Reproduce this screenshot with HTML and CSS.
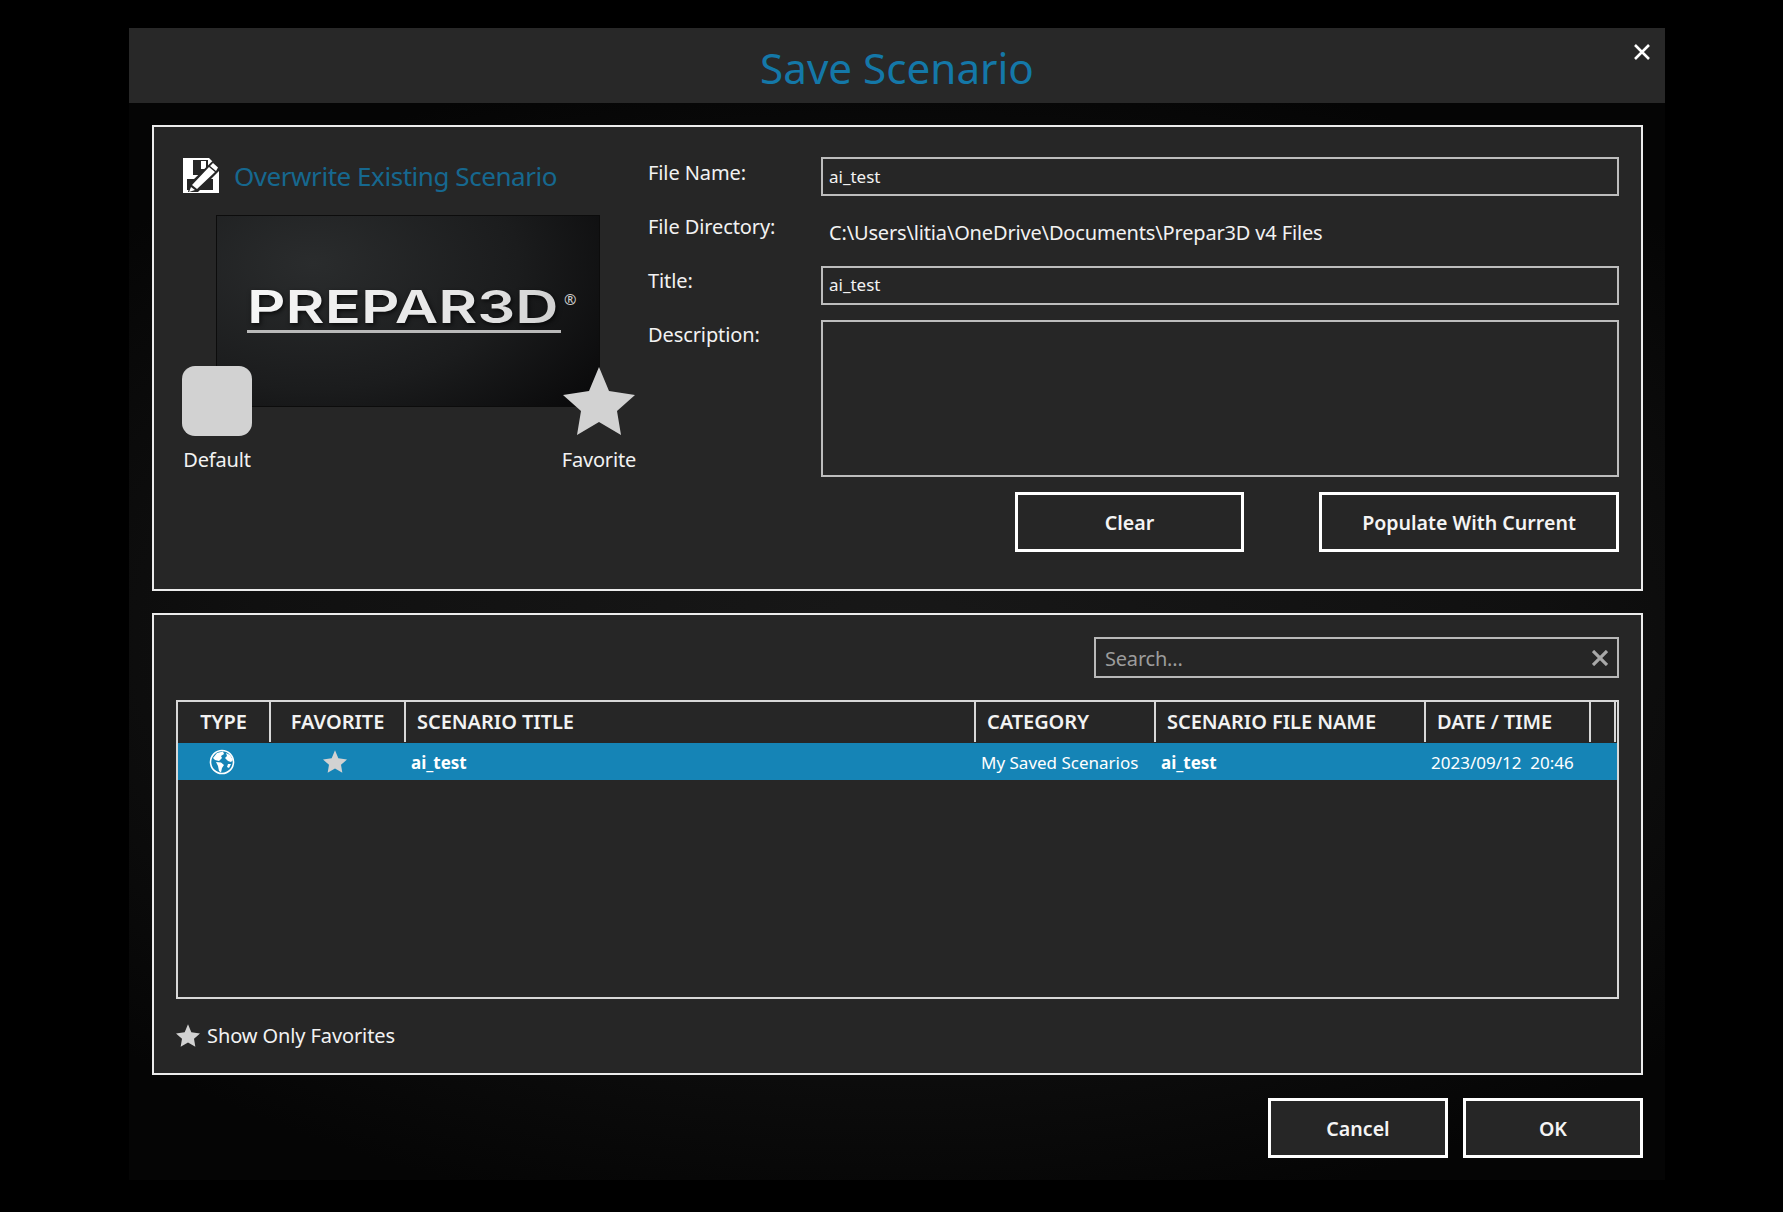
FILE: index.html
```html
<!DOCTYPE html>
<html lang="en">
<head>
<meta charset="utf-8">
<title>Save Scenario</title>
<link rel="stylesheet" href="styles.css">
</head>
<body>
<div class="dialog">
  <header class="titlebar">
    <h1 class="title">Save Scenario</h1>
    <button class="close" aria-label="Close"><svg width="16" height="16" viewBox="0 0 16 16"><path d="M1 1L15 15M15 1L1 15" stroke="#fff" stroke-width="2.6" fill="none"/></svg></button>
  </header>
  <div class="content">
    <section class="panel top">
      <div class="left">
        <div class="overwrite">
          <svg class="disk" width="36" height="35" viewBox="0 0 36 35"><path fill="#fff" d="M0 0H26L36 10V35H0Z"/><path fill="#262626" d="M10 2H25V17H10ZM4 21H30V32H4Z"/><path fill="#fff" d="M18 3H23V11H18Z"/><path fill="#262626" d="M29.500 3L36 8.500V13L15 34H5L7 25Z"/><path fill="#fff" d="M30 5L35 9.500L33 13L27 8ZM26 9L32 14L14 31L9 27ZM8 29L12 32L6 34Z"/></svg>
          <span class="overwrite-label">Overwrite Existing Scenario</span>
        </div>
        <div class="thumb">
          <div class="logo"><span class="logo-text">PREPAR3D</span><span class="logo-r">®</span></div>
          <div class="logo-rule"></div>
        </div>
        <div class="toggles">
          <div class="toggle"><div class="square"></div><span>Default</span></div>
          <div class="toggle"><svg class="star" width="72" height="68" viewBox="0 0 72 68"><path fill="#d2d2d2" d="M36 0L46 24L72 28L54 44L58 68L36 55L14 68L18 44L0 28L26 24Z"/></svg><span>Favorite</span></div>
        </div>
      </div>
      <div class="form">
        <div class="row r1"><label>File Name:</label><div class="input">ai_test</div></div>
        <div class="row r2"><label>File Directory:</label><div class="value">C:\Users\litia\OneDrive\Documents\Prepar3D v4 Files</div></div>
        <div class="row r3"><label>Title:</label><div class="input">ai_test</div></div>
        <div class="row r4"><label>Description:</label><div class="input area"></div></div>
        <div class="actions">
          <button class="btn clear">Clear</button>
          <button class="btn populate">Populate With Current</button>
        </div>
      </div>
    </section>
    <section class="panel bottom">
      <div class="search-row">
        <div class="search"><span class="search-text">Search...</span><svg width="16" height="16" viewBox="0 0 16 16"><path d="M1 1L15 15M15 1L1 15" stroke="#a8a8a8" stroke-width="3.200" fill="none"/></svg></div>
      </div>
      <div class="table">
        <div class="thead">
          <div class="th c-type center">TYPE</div>
          <div class="th c-fav center">FAVORITE</div>
          <div class="th c-title">SCENARIO TITLE</div>
          <div class="th c-cat">CATEGORY</div>
          <div class="th c-file">SCENARIO FILE NAME</div>
          <div class="th c-date">DATE / TIME</div>
          <div class="th c-end"></div>
        </div>
        <div class="tr">
          <div class="td c-type center ic-type"><svg width="26" height="26" viewBox="0 0 26 26"><circle cx="13" cy="13" r="11.500" fill="none" stroke="#fff" stroke-width="1.600"/><path fill="#fff" d="M4 9L8 4L14 2.500L15 5L12 7L13 9L10 12L6 11ZM7 13L12 13.500L15 16L13 19L12 23.500L10 22L9 17ZM17 4L21 6L24 11L22 13L19 12L16 9L18 7ZM19 15L22 15L20 19L18 18Z"/></svg></div>
          <div class="td c-fav center ic-fav"><svg width="24" height="23" viewBox="0 0 72 68"><path fill="#d2d2d2" d="M36 0L46 24L72 28L54 44L58 68L36 55L14 68L18 44L0 28L26 24Z"/></svg></div>
          <div class="td c-title strong">ai_test</div>
          <div class="td c-cat">My Saved Scenarios</div>
          <div class="td c-file strong">ai_test</div>
          <div class="td c-date">2023/09/12&nbsp; 20:46</div>
        </div>
      </div>
      <div class="favs"><svg width="24" height="23" viewBox="0 0 72 68"><path fill="#d2d2d2" d="M36 0L46 24L72 28L54 44L58 68L36 55L14 68L18 44L0 28L26 24Z"/></svg><span>Show Only Favorites</span></div>
    </section>
    <div class="footer">
      <button class="btn foot">Cancel</button>
      <button class="btn foot">OK</button>
    </div>
  </div>
</div>
</body>
</html>
```
FILE: styles.css
```css
* { box-sizing: border-box; }
html, body { margin: 0; height: 100%; background: #000; }
body { font-family: "Noto Sans", "Open Sans", sans-serif; color: #f2f2f2; overflow: hidden; padding: 28px 118px 0 129px; }
.dialog { width: 1536px; }
.titlebar { height: 75px; background: #282828; position: relative; display: flex; justify-content: center; }
.title { margin: 0; font-weight: 400; font-size: 42.2px; line-height: 80px; color: #1478a8; }
.close { position: absolute; right: 15px; top: 16px; padding: 0; border: 0; background: none; display: flex; }
.content { padding: 22px 22px 0 23px; height: 1077px; background: radial-gradient(ellipse 70% 55% at 50% 50%, #181818 0%, #101010 60%, #050505 100%); }
.panel { background: #262626; border: 2px solid #ececec; }
.top { height: 466px; display: flex; padding: 30px 22px 0 29px; }
.left { width: 465px; flex: none; }
.overwrite { display: flex; align-items: center; gap: 15px; height: 36px; }
.overwrite-label { font-size: 26px; line-height: 36px; padding-top: 2px; color: #16688f; white-space: nowrap; letter-spacing: -0.45px; }
.thumb { width: 384px; height: 192px; margin: 22px 0 0 33px; background: radial-gradient(ellipse 90% 110% at 25% 25%, #2a2c2d 0%, #1b1c1d 60%, #0b0b0c 100%); border: 1px solid #0c0c0c; display: flex; flex-direction: column; align-items: flex-start; padding: 74px 0 0 30px; }
.logo { display: flex; align-items: flex-start; height: 33px; }
.logo-text { display: block; width: 317px; font-family: "Inter", sans-serif; font-weight: 600; font-size: 45px; line-height: 33px; background: linear-gradient(90deg, #f6f6f6 0%, #e4e4e4 55%, #b4b4b4 100%); -webkit-background-clip: text; background-clip: text; color: transparent; transform: scaleX(1.33); transform-origin: left; white-space: nowrap; filter: drop-shadow(1px 2px 2px rgba(0,0,0,.7)); }
.logo-r { font-size: 15px; line-height: 15px; margin: 2px 0 0 0; color: #cfcfcf; }
.logo-rule { width: 314px; height: 3px; background: #b9b9b9; margin-top: 7px; }
.toggles { display: flex; justify-content: space-between; margin: -41px 0 0 -1px; width: 454px; position: relative; }
.toggle { display: flex; flex-direction: column; align-items: center; font-size: 20px; letter-spacing: -0.2px; line-height: 26px; }
.star { margin: 1px 0 12px; }
.square { width: 70px; height: 70px; border-radius: 13px; background: #d2d2d2; margin-bottom: 11px; }
.form { flex: 1; min-width: 0; position: relative; }
.row { display: flex; }
.row label { width: 173px; padding-top: 2px; flex: none; font-size: 20px; letter-spacing: -0.1px; line-height: 28px; }
.r3 label, .r4 label { padding-top: 1px; }
.r1 { height: 54px; }
.r2 { height: 55px; }
.r3 { height: 54px; }
.input { flex: 1; height: 39px; border: 2px solid #bdbdbd; font-size: 17px; line-height: 36px; padding-left: 6px; color: #f2f2f2; }
.r3 .input { line-height: 34px; }
.area { height: 157px; }
.value { flex: 1; padding: 8px 0 0 8px; font-size: 20px; letter-spacing: -0.16px; line-height: 28px; white-space: nowrap; }
.actions { display: flex; justify-content: flex-end; gap: 75px; margin-top: 15px; }
.btn { background: #262626; border: 3px solid #fff; color: #f4f4f4; font: 600 19.6px "Noto Sans", sans-serif; height: 60px; padding: 0; }
.clear { width: 229px; }
.populate { width: 300px; }
.bottom { height: 462px; margin-top: 22px; padding: 22px 22px 0 22px; }
.search-row { display: flex; justify-content: flex-end; }
.search { width: 525px; height: 41px; border: 2px solid #b8b8b8; display: flex; align-items: center; justify-content: space-between; padding: 0 9px 0 9px; color: #9c9c9c; font-size: 20px; letter-spacing: -0.2px; }
.search-text { padding-top: 2px; }
.search svg { flex: none; }
.table { height: 299px; margin-top: 22px; border: 2px solid #d8d8d8; }
.thead { display: flex; height: 41px; }
.th { font-weight: 600; font-size: 20px; letter-spacing: -0.05px; line-height: 40px; padding-left: 11px; border-right: 2px solid #d8d8d8; height: 40px; white-space: nowrap; }
.center { padding-left: 0; text-align: center; }
.tr { display: flex; height: 37px; background: #1584b6; align-items: center; }
.td { font-size: 17px; padding-left: 5px; padding-top: 1px; white-space: nowrap; color: #fff; }
.td.center { padding: 0; display: flex; justify-content: center; }
.td.ic-type { padding-right: 6px; }
.td.ic-fav { padding-right: 8px; }
.strong { font-weight: 700; }
.c-type { width: 93px; flex: none; }
.c-fav { width: 135px; flex: none; }
.c-title { width: 570px; flex: none; }
.c-cat { width: 180px; flex: none; }
.c-file { width: 270px; flex: none; }
.c-date { width: 165px; flex: none; }
.c-end { width: 25px; flex: none; }
.favs { display: flex; align-items: center; gap: 7px; margin-top: 23px; font-size: 20px; letter-spacing: -0.1px; }
.footer { display: flex; justify-content: flex-end; gap: 15px; margin-top: 23px; }
.foot { width: 180px; }
```
